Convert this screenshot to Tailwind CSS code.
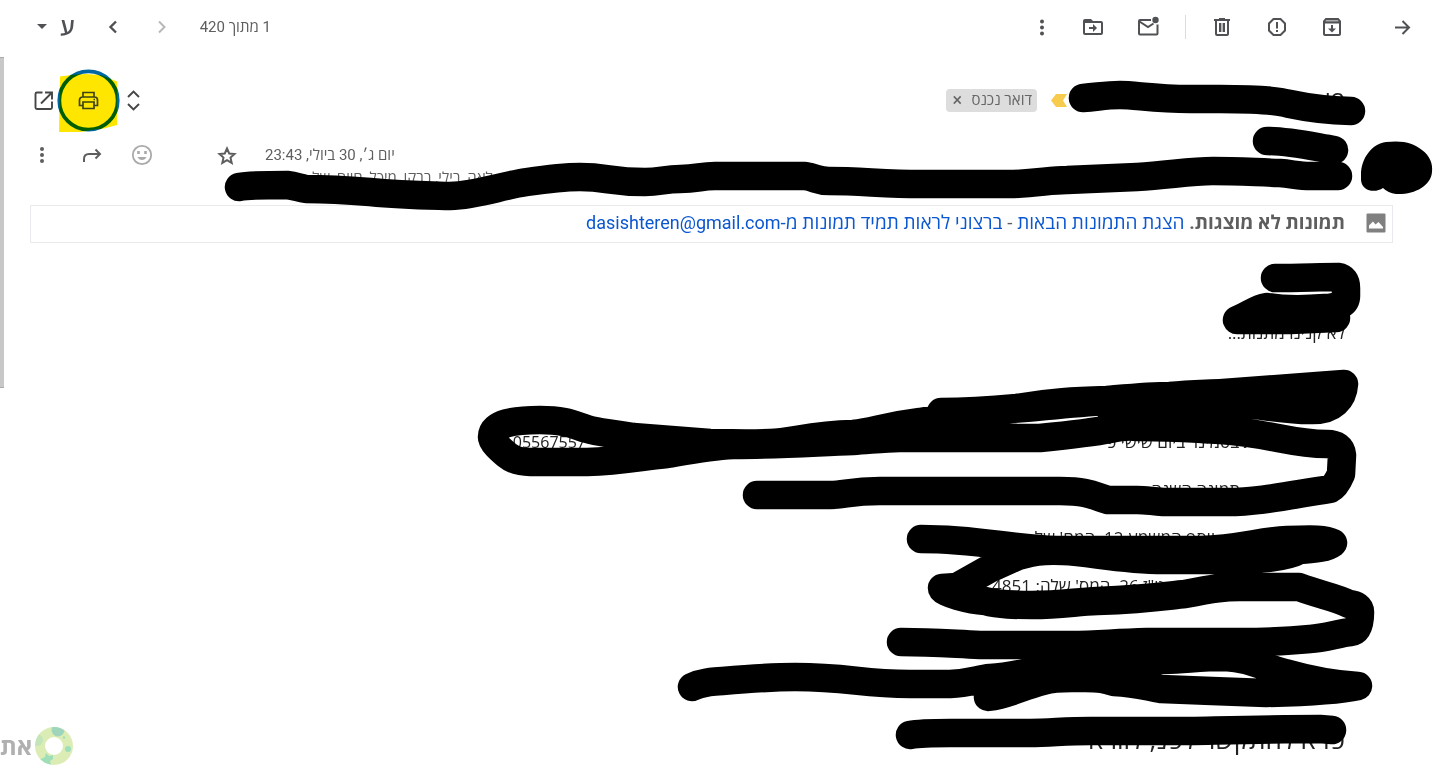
<!DOCTYPE html>
<html lang="he" dir="rtl">
<head>
  <meta charset="UTF-8">
  <meta name="viewport" content="width=device-width, initial-scale=1.0">
  <title>דואר נכנס</title>
  <script src="https://cdn.jsdelivr.net/npm/@tailwindcss/browser@4"></script>
</head>
<body class="relative min-h-screen overflow-hidden bg-white text-[#5e5e5e] font-['Roboto','Open_Sans','Liberation_Sans',sans-serif]">

  <!-- Toolbar -->
  <header class="flex h-[54px] items-center justify-between pr-3 pl-8">
    <div class="flex items-center text-[#4f5154]">
      <button class="flex h-10 w-10 items-center justify-center" aria-label="חזרה">
        <svg class="h-6 w-6" viewBox="0 0 24 24" fill="none" stroke="currentColor" stroke-width="2"><path d="M5 12.500h14M12.500 6l6.500 6.500-6.500 6.500"/></svg>
      </button>
      <div class="mr-[30px] flex gap-[15px]">
        <button class="flex h-10 w-10 items-center justify-center" aria-label="העברה לארכיון">
          <svg class="h-6 w-6" viewBox="0 0 24 24" fill="currentColor"><path d="M5.500 3h13L21 6v13a2 2 0 0 1-2 2H5a2 2 0 0 1-2-2V6zM5 8.500V19h14V8.500z" fill-rule="evenodd"/><path d="M5.800 5h12.400v1.500H5.800z" fill="#aaa"/><path d="M11 10h2v3.500h3l-4 4-4-4h3z"/></svg>
        </button>
        <button class="flex h-10 w-10 items-center justify-center" aria-label="דיווח על ספאם">
          <svg class="h-6 w-6" viewBox="0 0 24 24"><path d="M8.500 4h7L20 8.500v7L15.500 20h-7L4 15.500v-7z" fill="none" stroke="currentColor" stroke-width="2"/><path d="M11 7h2v6.500h-2zM11 15h2v2h-2z" fill="currentColor"/></svg>
        </button>
        <button class="flex h-10 w-10 items-center justify-center" aria-label="מחיקה">
          <svg class="h-6 w-6" viewBox="0 0 24 24" fill="currentColor"><path d="M15 4V3H9v1H4v2h1v13a2 2 0 0 0 2 2h10a2 2 0 0 0 2-2V6h1V4zm2 15H7V6h10z"/><path d="M9 8h2.400v9H9zM12.600 8H15v9h-2.400z"/></svg>
        </button>
      </div>
      <div class="mx-4 h-6 w-px bg-[#dadce0]"></div>
      <div class="flex gap-[15px]">
        <button class="flex h-10 w-10 items-center justify-center" aria-label="סימון כלא נקרא">
          <svg class="h-6 w-6" viewBox="0 0 24 24"><path d="M14 5H3a1 1 0 0 0-1 1v12.500a1 1 0 0 0 1 1h16.500a1 1 0 0 0 1-1V9.500M2.500 6.500l8.500 5.500 5.500-3.500" fill="none" stroke="currentColor" stroke-width="2"/><circle cx="18.500" cy="5" r="3.200" fill="currentColor"/></svg>
        </button>
        <button class="flex h-10 w-10 items-center justify-center" aria-label="העברה אל">
          <svg class="h-6 w-6" viewBox="0 0 24 24" fill="currentColor"><path d="M19 6h-8l-2-2H3a2 2 0 0 0-2 2v12a2 2 0 0 0 2 2h16a2 2 0 0 0 2-2V8a2 2 0 0 0-2-2zm0 12H3V8h16z"/><path d="M7 12h4V9l4 4-4 4v-3H7z"/></svg>
        </button>
        <button class="flex h-10 w-9 items-center justify-center" aria-label="עוד">
          <svg class="h-6 w-6" viewBox="0 0 24 24" fill="currentColor"><circle cx="13" cy="6.500" r="2"/><circle cx="13" cy="12.500" r="2"/><circle cx="13" cy="18.500" r="2"/></svg>
        </button>
      </div>
    </div>

    <div class="flex items-center text-[#4f5154]">
      <span class="text-[15px] text-[#5e5e5e]">1 מתוך 420</span>
      <button class="mr-[18px] flex h-10 w-10 items-center justify-center text-[#b8b8b8]" aria-label="חדש יותר" disabled>
        <svg class="h-6 w-6" viewBox="0 0 24 24" fill="none" stroke="currentColor" stroke-width="2"><path d="M9 6.500l5.500 5.500L9 17.500"/></svg>
      </button>
      <button class="mr-[9px] flex h-10 w-10 items-center justify-center" aria-label="ישן יותר">
        <svg class="h-6 w-6" viewBox="0 0 24 24" fill="none" stroke="currentColor" stroke-width="2.400"><path d="M15 6.500L9.500 12l5.500 5.500"/></svg>
      </button>
      <button class="mr-[18px] flex h-10 items-center gap-2 text-2xl font-semibold" aria-label="כלי קלט">
        <span class="leading-6">ע</span>
        <svg class="h-5 w-5" viewBox="0 0 20 20" fill="currentColor"><path d="M5 7h10l-5 5z"/></svg>
      </button>
    </div>
  </header>

  <main>
    <!-- Subject -->
    <div class="flex h-[92px] items-center justify-between pr-[89px] pl-[21px]">
      <div class="flex items-center">
        <h1 class="w-[278px] text-2xl leading-8 text-[#1f1f1f]">פו</h1>
        <svg class="h-[13px] w-4" viewBox="0 0 16 13" fill="#f7cb4d"><path d="M5 0h11l-4 6.500 4 6.500H5L0 6.500z"/></svg>
        <span class="mr-[14px] flex h-[23px] items-center gap-2 rounded bg-[#ddd] px-[5px] text-[15px] text-[#666]">
          דואר נכנס
          <button class="w-3 text-lg leading-4" aria-label="הסרת התווית">×</button>
        </span>
      </div>
      <div class="flex text-[#444746]">
        <button class="flex h-10 w-[45px] items-center justify-center" aria-label="הרחבת הכול">
          <svg class="h-6 w-6" viewBox="0 0 24 24" fill="none" stroke="currentColor" stroke-width="1.900"><path d="M6 9L11.500 3.500 17 9M6 16l5.500 5.500L17 16"/></svg>
        </button>
        <button class="relative flex h-10 w-[45px] items-center justify-center" aria-label="הדפסה">
          <svg class="absolute -top-3 -left-2.5 h-16 w-16" viewBox="0 0 64 64">
            <circle cx="32.500" cy="32.500" r="29.200" fill="none" stroke="#0067a3" stroke-width="3.800"/>
            <path class="mix-blend-multiply" d="M4 8.500Q28 4 46 7.500L61 13.500V57L48 60.500Q32 62 21 65H3z" fill="#ffe600"/>
          </svg>
          <svg class="relative h-6 w-6" viewBox="0 0 24 24" fill="none" stroke="#3d4415" stroke-width="1.700"><path d="M6 8.500V4.500h11v4M6 17.500H2.500V12A3 3 0 0 1 5.500 9h12a3 3 0 0 1 3 3v5.500H17M6 14h11v6.500H6z"/><path d="M16.500 11.500H18"/></svg>
        </button>
        <button class="flex h-10 w-[45px] items-center justify-center" aria-label="פתיחה בחלון חדש">
          <svg class="h-6 w-6" viewBox="0 0 24 24" fill="none" stroke="currentColor" stroke-width="1.900"><path d="M10.500 4.500H5Q3.500 4.500 3.500 6v13.500Q3.500 21 5 21h13.500q1.500 0 1.500-1.500V13.500M13 4.500h7v7M20 4.500L9 15.500"/></svg>
        </button>
      </div>
    </div>

    <!-- Sender -->
    <div class="flex h-[59px] items-start justify-end pl-[30px]">
      <div class="text-[15px]">
        <div class="flex items-center">
          <time class="leading-[18px]">יום ג׳, 30 ביולי, 23:43</time>
          <button class="mr-[26px] flex h-[18px] w-6 items-center" aria-label="הוספת כוכב">
            <svg class="h-6 w-6" viewBox="0 0 24 24" fill="none" stroke="#5e5e5e" stroke-width="2"><path d="M12 5.500l2.200 5 5.300.5-4 3.600 1.200 5.300-4.700-2.800-4.700 2.800 1.200-5.300-4-3.600 5.300-.5z"/></svg>
          </button>
          <button class="mr-[61px] flex h-[18px] w-6 items-center" aria-label="הוספת תגובה">
            <svg class="h-6 w-6" viewBox="0 0 24 24" fill="none" stroke="#aaa" stroke-width="1.800"><circle cx="12" cy="12" r="9.200"/><path d="M7.500 14h9q-1.500 3-4.500 3t-4.500-3z" fill="#aaa" stroke="none"/><path d="M8.500 8v3M15.500 8v3" stroke-width="2.600"/></svg>
          </button>
          <button class="mr-[26px] flex h-[18px] w-6 items-center" aria-label="העברה">
            <svg class="h-6 w-6" viewBox="0 0 24 24" fill="none" stroke="#5e5e5e" stroke-width="2"><path d="M4 19v-3q0-5 5-5h11M15.500 6.500L20 11l-4.500 4.500"/></svg>
          </button>
          <button class="mr-[26px] flex h-[18px] w-6 items-center" aria-label="אפשרויות נוספות">
            <svg class="h-6 w-6" viewBox="0 0 24 24" fill="#5e5e5e"><circle cx="12" cy="6" r="2"/><circle cx="12" cy="12" r="2"/><circle cx="12" cy="18" r="2"/></svg>
          </button>
        </div>
        <p class="-mr-[98px] mt-1 leading-5">לאה, בילי, ברקו, מיכל, חיים, של</p>
      </div>
    </div>

    <!-- Blocked images notice -->
    <div class="mr-[41px] ml-[30px] flex h-[38px] items-center border border-[#e8eaed] pr-1.5 pb-[3px] text-[19px]">
      <svg class="h-5 w-5" viewBox="0 0 20 20"><rect x=".5" y=".5" width="19" height="19" rx="1" fill="#808080"/><path d="M3 15.500v-3l4-4 2.500 3 3-2.500 4.500 5v1.500z" fill="#fff"/></svg>
      <p class="mr-[21px] leading-6">
        <strong class="font-bold">תמונות לא מוצגות.</strong>
        <a href="#" class="text-[#0b57d0]">הצגת התמונות הבאות</a>
        -
        <a href="#" class="text-[#0b57d0]">ברצוני לראות תמיד תמונות מ-<bdi class="text-lg leading-6">dasishteren@gmail.com</bdi></a>
      </p>
    </div>

    <!-- Message -->
    <article class="pt-[78px] pr-[89px] font-['Open_Sans',sans-serif] text-[17px] leading-6 text-[#222]">
      <p>לא קנינו מתנות...</p>
      <div class="mt-[85px] flex flex-col gap-6">
        <p class="flex pr-[80px]"><span class="w-[679px]">חת בסמינר ביום שישי פ</span><span class="text-base">05567557</span></p>
        <p class="pr-[105px]">תמונה השנה</p>
        <p class="pr-[130px]">יוסף המשמע 12, המח' של</p>
        <p class="pr-[180px]">ט"ז 26, המס' שלה: 4851</p>
      </div>
      <p class="mt-[123px] text-[26px] leading-9">פרא להתקשר לפנ, לוורא</p>
    </article>
  </main>

  <!-- Scrollbar -->
  <div class="absolute top-[57px] left-0 h-[331px] w-1 border-t border-b border-[#aaa] bg-[#c8c8c8]"></div>

  <!-- Site logo -->
  <div class="absolute top-[727px] left-0 flex items-center gap-[3px] font-['Open_Sans',sans-serif]" dir="ltr">
    <span class="text-2xl leading-9 font-bold text-[#b0b0b0]">את</span>
    <svg class="h-[38px] w-[38px]" viewBox="0 0 38 38">
      <clipPath id="ring"><path d="M19 0a19 19 0 1 0 0 38 19 19 0 0 0 0-38zm0 10a9 9 0 1 1 0 18 9 9 0 0 1 0-18z" clip-rule="evenodd"/></clipPath>
      <g clip-path="url(#ring)">
        <rect width="38" height="38" fill="#dcecb5"/>
        <circle cx="23" cy="3" r="6.500" fill="#9fd5bb"/>
        <circle cx="2" cy="13" r="6" fill="#c3e5b9"/>
        <circle cx="33" cy="22" r="3" fill="#9edfb9"/>
        <circle cx="29" cy="10.500" r="1.200" fill="#9edfb9"/>
        <path d="M11 26l3 3 4-1v4l-3 2 1 4H7l1-4-4-1 6-3z" fill="#9edfb9"/>
      </g>
    </svg>
  </div>

  <!-- Marker strokes -->
  <svg class="pointer-events-none absolute top-0 right-0 h-[782px] w-[1434px]" viewBox="0 0 1434 782" aria-hidden="true">
    <g fill="none" stroke="#000" stroke-width="28.500" stroke-linecap="round" stroke-linejoin="round">
      <path d="M1083 98C1098 97 1105 95 1120 95S1155 99 1190 99H1220C1250 99 1268 100 1280 102S1310 110 1351 111"/>
      <path d="M1267 141C1290 141 1315 147 1334 150"/>
      <path d="M239 187C250 185 265 185 287 185C296 186 299 188 306 189C330 189 345 190 370 192C400 195 410 195 450 196C478 195 500 186 527 182S565 177 580 177C608 177 610 182 645 182C660 182 665 179 680 179C698 179 700 176 715 176H805C817 178 817 181 829 181C860 181 885 184 920 184H1014C1040 183 1050 180 1067 180L1137 177C1170 175 1190 171 1213 171S1250 172 1280 173C1292 174 1300 176 1310 176H1338"/>
      <path d="M1275 278C1300 278 1320 277 1338 277Q1346 278 1346 288V296Q1346 307 1325 308C1300 310 1285 310 1267 307C1255 309 1250 315 1237 320H1290L1336 318"/>
      <path d="M941 412C970 412 995 410 1017 408C1050 402 1075 401 1107 400C1130 398 1150 396 1170 396C1190 394 1205 394 1223 393L1317 386L1344 384C1343 399 1333 410 1313 410C1290 411 1260 405 1240 403C1200 399 1150 398 1108 401C1070 403 1040 407 1013 409S950 417 920 422C880 427 875 432 853 434C810 435 790 443 770 443C740 444 735 443 710 443L633 437C605 432 600 433 587 429S565 420 540 420S492 423 492 437C492 442 500 449 507 455C513 460 522 462 530 462H587C620 461 645 456 667 454C690 450 710 446 733 445C780 445 820 442 853 441C870 440 885 438 900 438H1040C1070 435 1090 433 1110 429S1130 427 1140 427C1180 427 1195 429 1220 430C1270 433 1290 444 1327 444Q1341 444 1342 455L1341 474Q1336 486 1330 489C1290 495 1260 502 1227 502H1163C1150 501 1145 500 1137 500H1108C1095 497 1092 491 1060 491H880C850 491 845 495 830 495H757"/>
      <path d="M1110 409L1240 411"/>
      <path d="M921 539C980 539 1010 549 1057 550H1200C1240 549 1260 541 1287 540S1325 539 1333 543C1325 549 1310 549 1300 550C1280 560 1250 559 1218 560H1164C1120 560 1090 552 1063 551S1030 553 1018 556L989 569L957 587L942 588C942 593 970 600 985 601C1000 605 1015 605 1032 605C1060 605 1075 602 1097 601C1150 599 1165 596 1185 594C1215 588 1225 587 1240 587H1299C1320 595 1335 597 1349 604Q1360 605 1360 612C1360 625 1357 631 1351 632C1340 633 1325 638 1310 639C1290 641 1270 642 1239 642H1147C1110 643 1100 645 1070 645H980C940 643 930 642 901 642"/>
      <path d="M692 687C700 683 705 683 710 682C735 680 765 677 795 677C850 677 860 684 910 684H950C970 683 978 679 990 678C1030 676 1060 660 1100 660H1164C1190 659 1200 657 1225 657C1250 658 1265 668 1285 673C1320 683 1340 685 1358 686C1340 690 1310 692 1266 693L1212 691L1161 689C1140 685 1135 683 1114 682C1105 679 1100 678 1085 678C1065 678 1055 677 1043 681C1020 687 1010 694 988 697"/>
      <path d="M910 735C920 733 935 733 950 733H1030C1050 733 1065 731 1090 731H1190C1240 730 1280 729 1320 729L1332 730"/>
    </g>
    <path d="M1361 175C1361 158 1372 144 1386 142C1403 140 1414 143 1422 150C1430 156 1433 164 1432 172C1431 186 1414 195 1396 194Q1388 193 1383 188C1376 193 1362 192 1361 180z"/>
  </svg>
</body>
</html>
